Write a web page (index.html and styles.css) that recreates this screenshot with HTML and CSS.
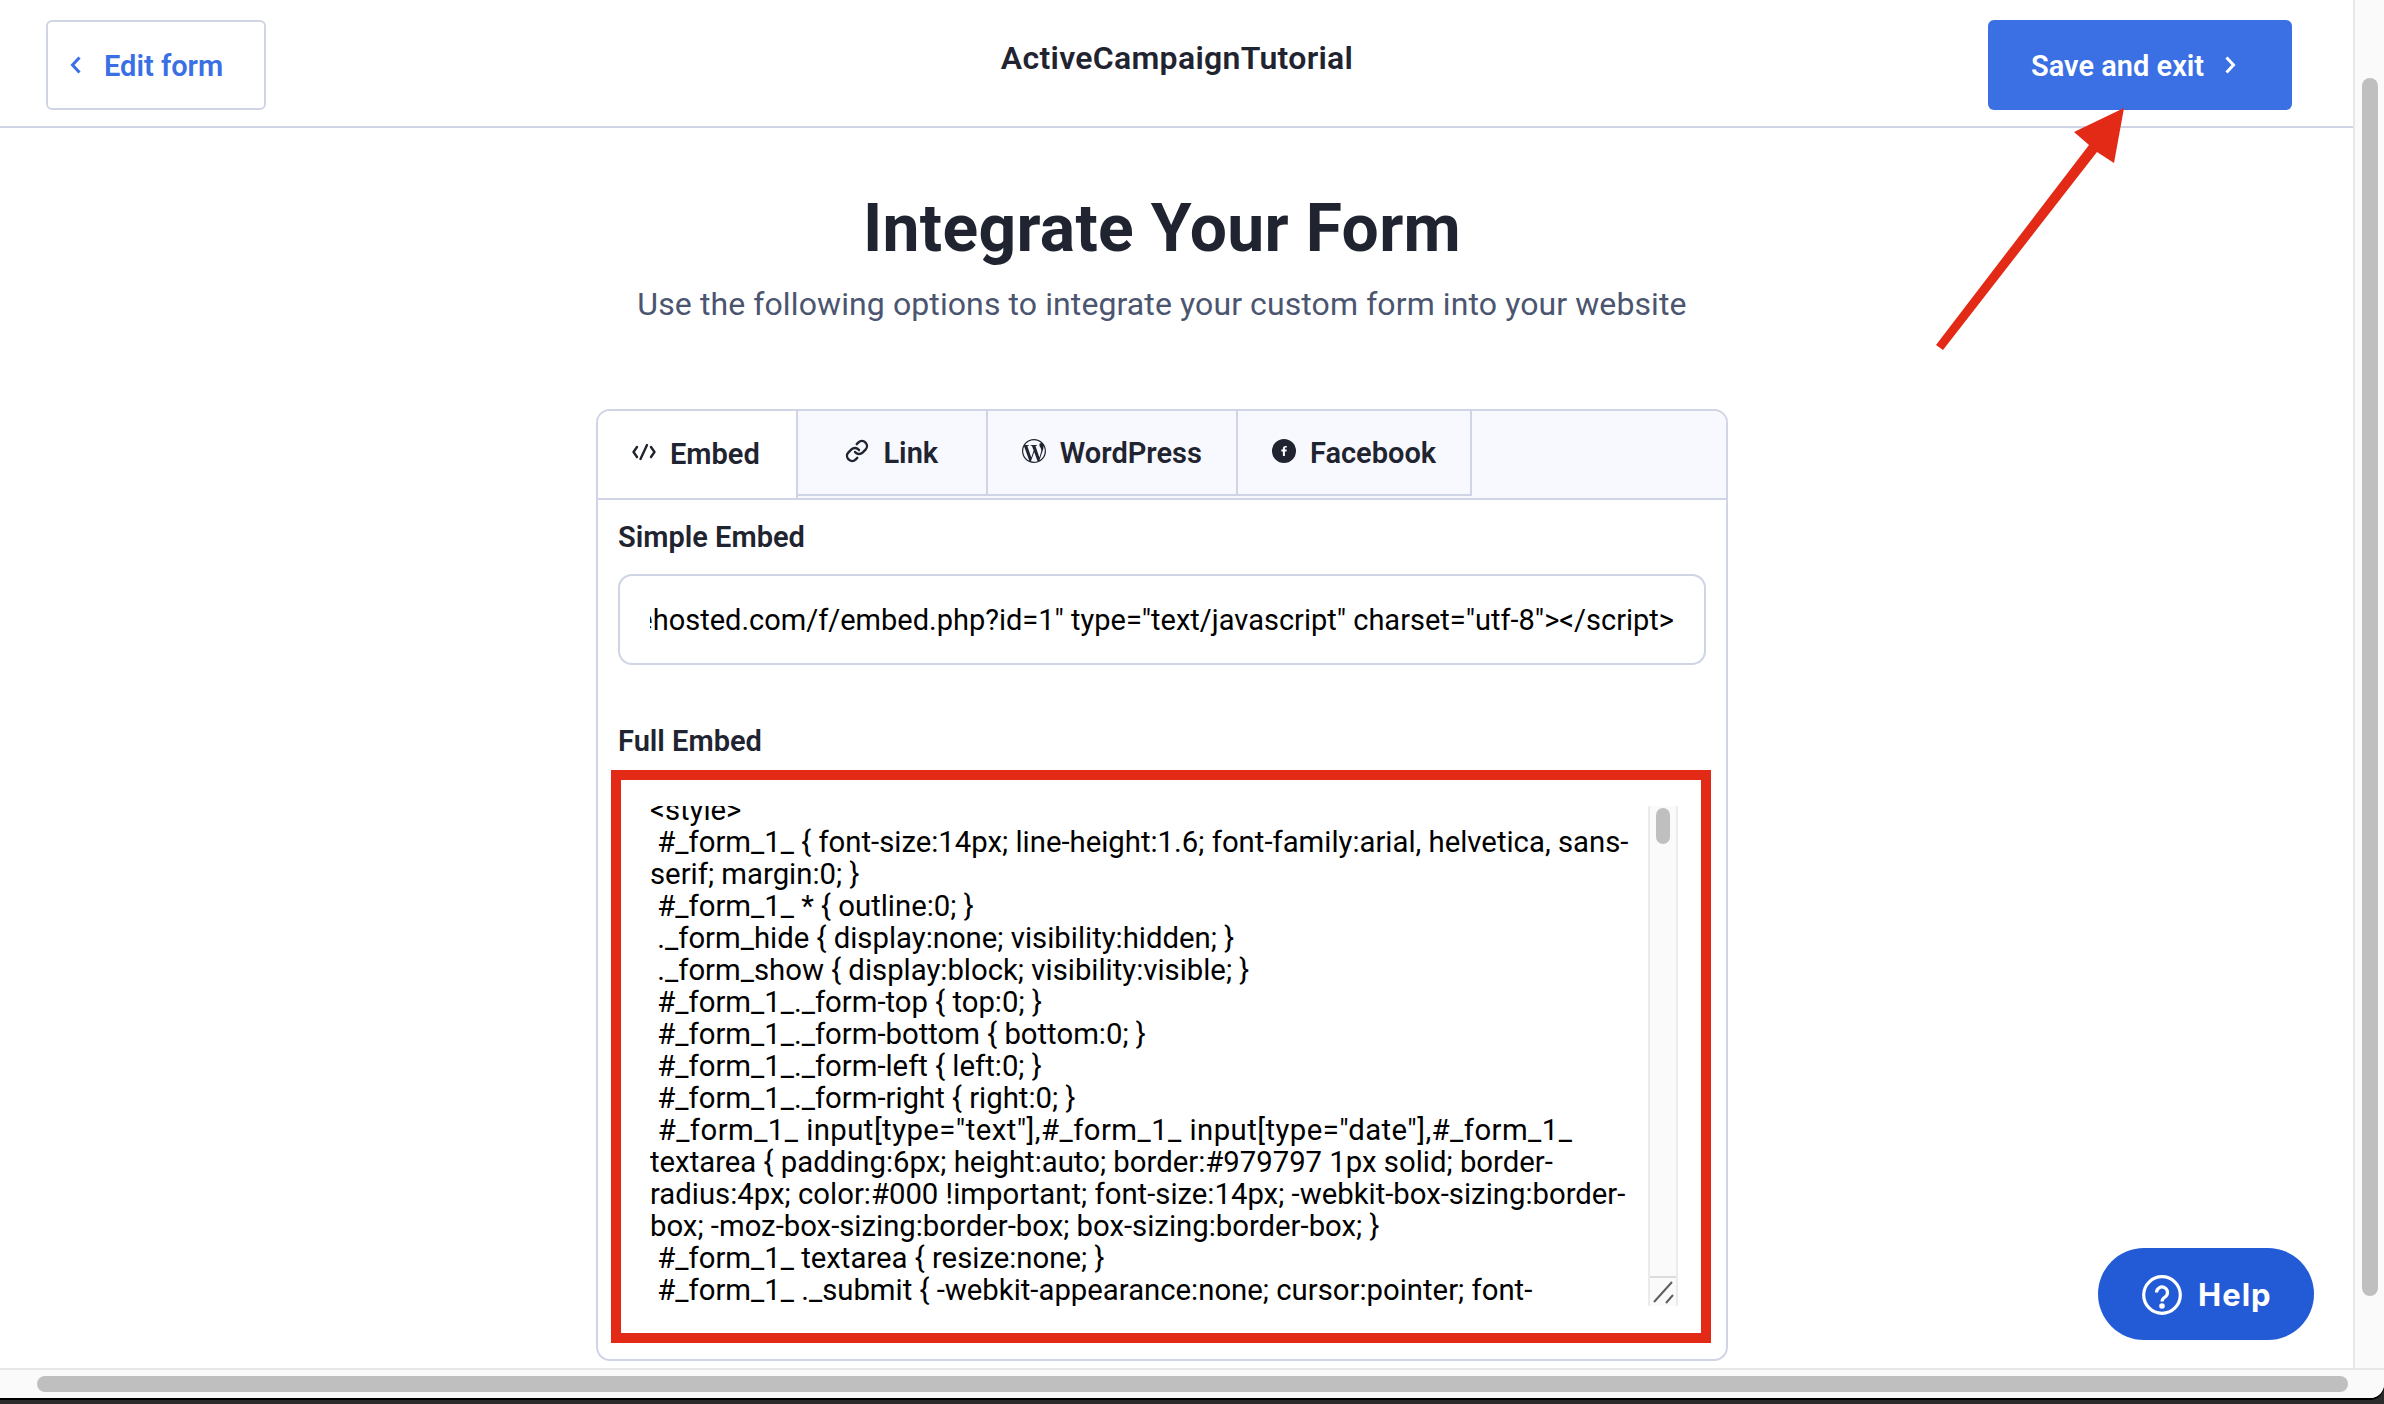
FILE: index.html
```html
<!DOCTYPE html>
<html lang="en">
<head>
<meta charset="utf-8">
<title>Integrate Your Form</title>
<link rel="stylesheet" href="styles.css">
</head>
<body>
<div class="window">
  <div class="viewport">
    <div class="page">
      <header class="topbar">
        <div class="topbar-left">
          <a class="btn btn-outline">
            <svg class="chev" viewBox="0 0 12 18"><path d="M9.5 1.5 2.5 9l7 7.5"/></svg>
            <span>Edit form</span>
          </a>
        </div>
        <div class="topbar-title">ActiveCampaignTutorial</div>
        <div class="topbar-right">
          <a class="btn btn-primary">
            <span>Save and exit</span>
            <svg class="chev" viewBox="0 0 12 18"><path d="M2.5 1.5 9.5 9l-7 7.5"/></svg>
          </a>
        </div>
      </header>
      <main class="main">
        <h1 class="title">Integrate Your Form</h1>
        <p class="subtitle">Use the following options to integrate your custom form into your website</p>
        <section class="card">
          <nav class="tabs">
            <div class="tab tab-active">
              <svg class="tab-icon" viewBox="0 0 24 24"><path d="M5 7 1.5 12 5 17M15 5 8.5 19M19 7l3.5 5L19 17"/></svg>
              <span>Embed</span>
            </div>
            <div class="tab">
              <svg class="tab-icon" viewBox="0 0 24 24"><path d="M10 13a5 5 0 0 0 7.54.54l3-3a5 5 0 0 0-7.07-7.07l-1.72 1.71"/><path d="M14 11a5 5 0 0 0-7.54-.54l-3 3a5 5 0 0 0 7.07 7.07l1.71-1.71"/></svg>
              <span>Link</span>
            </div>
            <div class="tab">
              <svg class="tab-icon solid" viewBox="0 0 24 24"><path d="M21.469 6.825c.84 1.537 1.318 3.3 1.318 5.175 0 3.979-2.156 7.456-5.363 9.325l3.295-9.527c.615-1.54.82-2.771.82-3.864 0-.405-.026-.78-.07-1.11m-7.981.105c.647-.03 1.232-.105 1.232-.105.582-.075.514-.93-.067-.899 0 0-1.755.135-2.88.135-1.064 0-2.85-.15-2.85-.15-.585-.03-.661.855-.075.885 0 0 .54.061 1.125.09l1.68 4.605-2.37 7.08L5.354 6.9c.649-.03 1.234-.1 1.234-.1.585-.075.516-.93-.065-.896 0 0-1.746.138-2.874.138-.2 0-.438-.008-.69-.015C4.911 3.15 8.235 1.215 12 1.215c2.809 0 5.365 1.072 7.286 2.833-.046-.003-.091-.009-.141-.009-1.06 0-1.812.923-1.812 1.914 0 .89.513 1.643 1.06 2.531.411.72.89 1.643.89 2.977 0 .915-.354 1.994-.821 3.479l-1.075 3.585-3.9-11.61.001.014zM12 22.784c-1.059 0-2.081-.153-3.048-.437l3.237-9.406 3.315 9.087c.024.053.05.101.078.149-1.12.393-2.325.609-3.582.609M1.211 12c0-1.564.336-3.05.935-4.39L7.29 21.709C3.694 19.96 1.212 16.271 1.211 12M12 0C5.385 0 0 5.385 0 12s5.385 12 12 12 12-5.385 12-12S18.615 0 12 0"/></svg>
              <span>WordPress</span>
            </div>
            <div class="tab">
              <svg class="tab-icon solid" viewBox="0 0 24 24"><circle cx="12" cy="12" r="12"/><path class="fb-f" d="M12.9 17v-4.5h1.6l.25-1.9h-1.85V9.5c0-.55.15-.9.9-.9h1V7c-.2 0-.8-.07-1.45-.07-1.45 0-2.45.88-2.45 2.5v1.17H9.3v1.9h1.6V17z"/></svg>
              <span>Facebook</span>
            </div>
          </nav>
          <div class="card-body">
            <label class="field-label">Simple Embed</label>
            <div class="input"><div class="input-clip"><span class="input-text">&lt;script src="https://youraccountname.activehosted.com/f/embed.php?id=1" type="text/javascript" charset="utf-8"&gt;&lt;/script&gt;</span></div></div>
            <label class="field-label field-label-full">Full Embed</label>
            <div class="highlight">
              <div class="code-wrap">
<pre class="code">&lt;style&gt;
 #_form_1_ { font-size:14px; line-height:1.6; font-family:arial, helvetica, sans-
serif; margin:0; }
 #_form_1_ * { outline:0; }
 ._form_hide { display:none; visibility:hidden; }
 ._form_show { display:block; visibility:visible; }
 #_form_1_._form-top { top:0; }
 #_form_1_._form-bottom { bottom:0; }
 #_form_1_._form-left { left:0; }
 #_form_1_._form-right { right:0; }
<span class="code-wide"> #_form_1_ input[type="text"],#_form_1_ input[type="date"],#_form_1_</span>
textarea { padding:6px; height:auto; border:#979797 1px solid; border-
radius:4px; color:#000 !important; font-size:14px; -webkit-box-sizing:border-
box; -moz-box-sizing:border-box; box-sizing:border-box; }
 #_form_1_ textarea { resize:none; }
 #_form_1_ ._submit { -webkit-appearance:none; cursor:pointer; font-</pre>
              </div>
              <div class="code-scroll">
                <div class="code-track"><div class="code-thumb"></div></div>
                <div class="code-resizer">
                  <svg viewBox="0 0 26 26"><path d="M4 24 22 4M16 25l7-8"/></svg>
                </div>
              </div>
            </div>
          </div>
        </section>
      </main>
    </div>
    <div class="vscroll"><div class="vthumb"></div></div>
  </div>
  <div class="hscroll"><div class="hthumb"></div></div>
  <svg class="arrow" viewBox="0 0 2384 1404"><polygon points="2124,108 2074,132 2089,145 1936,345 1943,350 2097,152 2114,163"/></svg>
  <a class="help">
    <svg viewBox="0 0 40 40"><circle cx="20" cy="20" r="18.3"/><path d="M14.5 17.5a5.5 5.5 0 1 1 8.6 4.5c-2 1.3-3.1 2.2-3.1 4.5"/><circle class="dot" cx="20" cy="31" r="1.2"/></svg>
    <span>Help</span>
  </a>
</div>
</body>
</html>
```
FILE: styles.css
```css
* { box-sizing: border-box; }
html, body { margin: 0; height: 100%; }
body {
  width: 2384px;
  height: 1404px;
  overflow: hidden;
  background: #2b2b2b;
  font-family: "Roboto", "Noto Sans", sans-serif;
  color: #1f2430;
}
.window {
  position: relative;
  height: 1398px;
  display: flex;
  flex-direction: column;
  background: #fafafa;
  border-radius: 0 0 14px 0;
  box-shadow: 0 2px 0 #000;
  overflow: hidden;
}
.viewport { flex: 1; display: flex; min-height: 0; }
.page { flex: 1; min-width: 0; background: #fff; }

/* top bar */
.topbar {
  height: 128px;
  padding: 20px 61px 0 46px;
  border-bottom: 2px solid #cfd5e5;
  display: grid;
  grid-template-columns: 1fr auto 1fr;
  align-items: start;
}
.topbar-right { display: flex; justify-content: flex-end; }
.topbar-title {
  font-size: 32px;
  font-weight: 600;
  line-height: 40px;
  margin: 18px 0 0 16px;
  letter-spacing: 0.3px;
}
.btn {
  height: 90px;
  padding-top: 2px;
  display: inline-flex;
  align-items: center;
  font-size: 29px;
  font-weight: 600;
  border-radius: 6px;
}
.btn-outline {
  width: 220px;
  padding-left: 22px;
  gap: 22px;
  color: #3b6fe4;
  border: 2px solid #cfd5e5;
}
.btn-primary {
  width: 304px;
  padding-left: 43px;
  gap: 20px;
  color: #fff;
  background: #3b6fe4;
}
.chev { width: 12px; height: 18px; flex: none; margin-top: -2px; }
.chev path { fill: none; stroke: currentColor; stroke-width: 3; }

/* main */
.main {
  padding-right: 29px;
  display: flex;
  flex-direction: column;
  align-items: center;
}
.title {
  margin: 61px 0 0;
  font-size: 66px;
  line-height: 80px;
  font-weight: 700;
  letter-spacing: 0.3px;
}
.subtitle {
  margin: 13px 0 0;
  font-size: 32px;
  line-height: 44px;
  letter-spacing: 0.1px;
  color: #4b5570;
}
.card {
  margin-top: 83px;
  width: 1132px;
  border: 2px solid #cfd5e5;
  border-radius: 14px;
  overflow: hidden;
}

/* tabs */
.tabs {
  height: 89px;
  display: flex;
  align-items: flex-start;
  background: #f7f9fe;
  border-bottom: 2px solid #cfd5e5;
}
.tab {
  height: 85px;
  min-width: 190px;
  padding: 0 34px;
  display: flex;
  align-items: center;
  justify-content: center;
  gap: 14px;
  font-size: 29px;
  font-weight: 600;
  border-right: 2px solid #cfd5e5;
  border-bottom: 2px solid #cfd5e5;
}
.tab-active { height: 87px; padding-bottom: 2px; padding-right: 36px; background: #fff; border-bottom: 0; }
.tab-icon { width: 24px; height: 24px; flex: none; margin-top: -4px; }
.tab-icon path { fill: none; stroke: #1f2430; stroke-width: 2.4; stroke-linecap: round; stroke-linejoin: round; }
.tab-icon.solid { fill: #1f2430; }
.tab-icon.solid path { fill: #1f2430; stroke: none; }
.tab-icon.solid .fb-f { fill: #fff; }

/* card body */
.card-body { padding: 17px 20px 16px 20px; display: flex; flex-direction: column; }
.field-label { font-size: 29px; font-weight: 600; line-height: 40px; }
.field-label-full { margin-top: 56px; }
.input {
  margin-top: 17px;
  height: 91px;
  padding: 0 30px;
  border: 2px solid #cfd5e5;
  border-radius: 14px;
  display: flex;
  align-items: center;
}
.input-clip {
  flex: 1;
  min-width: 0;
  display: flex;
  justify-content: flex-end;
  overflow: hidden;
}
.input-text { flex: none; font-size: 29px; line-height: 40px; color: #000; white-space: nowrap; }
.highlight {
  margin: 9px -5px 0 -7px;
  height: 573px;
  border: 10px solid #e32a17;
  padding: 26px 23px 27px 29px;
  display: flex;
  background: #fff;
}
.code-wrap { flex: 1; min-width: 0; overflow: hidden; }
.code {
  margin: -12px 0 0;
  font-family: inherit;
  font-size: 29.3px;
  line-height: 32px;
  color: #000;
  white-space: pre;
}
.code-wide { letter-spacing: 0.45px; }
.code-scroll {
  width: 30px;
  flex: none;
  display: flex;
  flex-direction: column;
  background: #fafafa;
  border-left: 2px solid #ebebeb;
  border-right: 2px solid #ebebeb;
}
.code-track { flex: 1; padding: 2px 6px; }
.code-thumb { height: 36px; background: #bfbfbf; border-radius: 8px; }
.code-resizer { height: 30px; border-top: 2px solid #dcdcdc; }
.code-resizer svg { display: block; width: 26px; height: 26px; }
.code-resizer path { fill: none; stroke: #5f5f5f; stroke-width: 2; }

/* window scrollbars */
.vscroll { width: 31px; flex: none; padding: 78px 6px 0 7px; border-left: 2px solid #e8e8e8; background: #fafafa; }
.vthumb { height: 1218px; background: #bfbfbf; border-radius: 8px; }
.hscroll { height: 30px; flex: none; padding: 6px 36px 6px 37px; border-top: 2px solid #e8e8e8; background: #fafafa; }
.hthumb { height: 16px; background: #bfbfbf; border-radius: 8px; }

/* overlays */
.arrow { position: absolute; left: 0; top: 0; width: 2384px; height: 1404px; pointer-events: none; }
.arrow polygon { fill: #e32a17; }
.help {
  position: absolute;
  left: 2098px;
  top: 1248px;
  width: 216px;
  height: 92px;
  padding-left: 44px;
  display: flex;
  align-items: center;
  gap: 16px;
  border-radius: 46px;
  background: #235bd7;
  color: #fff;
  font-family: "Inter", sans-serif;
  font-size: 31px;
  font-weight: 700;
  letter-spacing: 1px;
}
.help svg { width: 40px; height: 40px; flex: none; margin-top: 2px; }
.help circle, .help path { fill: none; stroke: #fff; stroke-width: 3.2; }
.help .dot { fill: #fff; }
```
